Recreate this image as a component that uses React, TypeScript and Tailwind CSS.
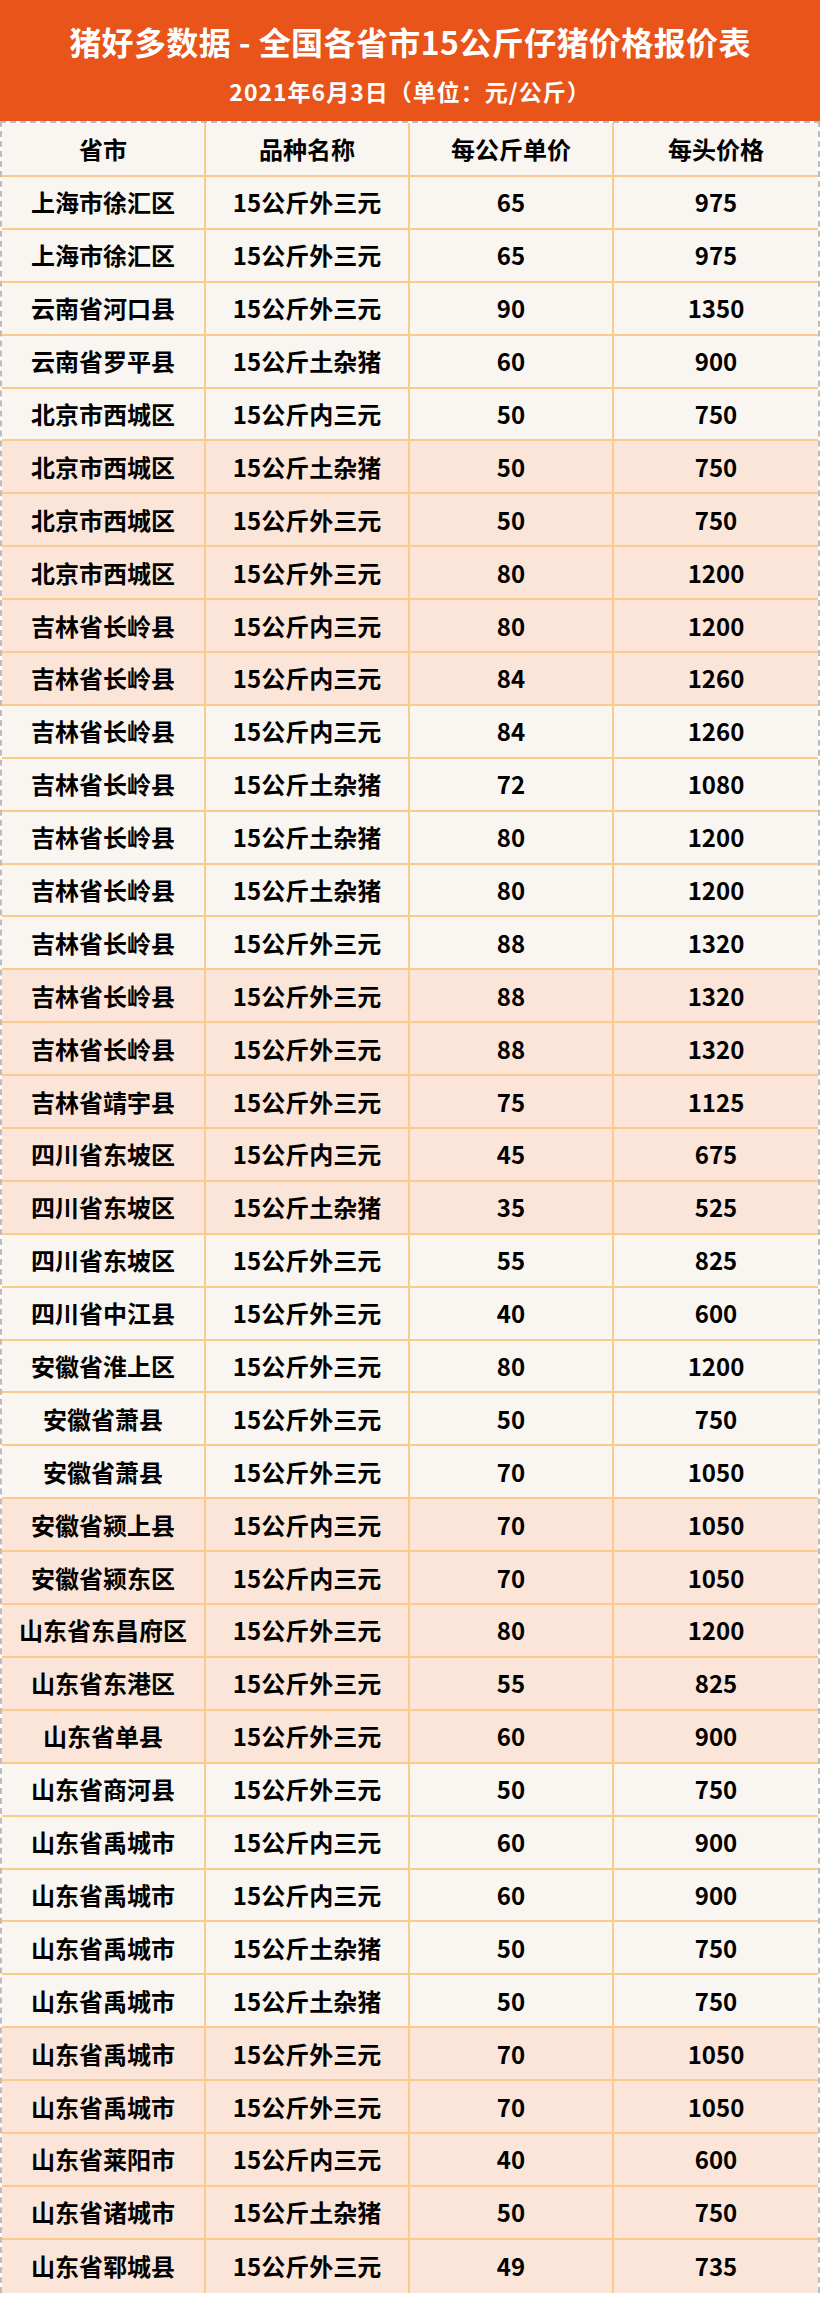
import React from "react";

const rows: [string, string, string, string][] = [
  ["上海市徐汇区", "15公斤外三元", "65", "975"],
  ["上海市徐汇区", "15公斤外三元", "65", "975"],
  ["云南省河口县", "15公斤外三元", "90", "1350"],
  ["云南省罗平县", "15公斤土杂猪", "60", "900"],
  ["北京市西城区", "15公斤内三元", "50", "750"],
  ["北京市西城区", "15公斤土杂猪", "50", "750"],
  ["北京市西城区", "15公斤外三元", "50", "750"],
  ["北京市西城区", "15公斤外三元", "80", "1200"],
  ["吉林省长岭县", "15公斤内三元", "80", "1200"],
  ["吉林省长岭县", "15公斤内三元", "84", "1260"],
  ["吉林省长岭县", "15公斤内三元", "84", "1260"],
  ["吉林省长岭县", "15公斤土杂猪", "72", "1080"],
  ["吉林省长岭县", "15公斤土杂猪", "80", "1200"],
  ["吉林省长岭县", "15公斤土杂猪", "80", "1200"],
  ["吉林省长岭县", "15公斤外三元", "88", "1320"],
  ["吉林省长岭县", "15公斤外三元", "88", "1320"],
  ["吉林省长岭县", "15公斤外三元", "88", "1320"],
  ["吉林省靖宇县", "15公斤外三元", "75", "1125"],
  ["四川省东坡区", "15公斤内三元", "45", "675"],
  ["四川省东坡区", "15公斤土杂猪", "35", "525"],
  ["四川省东坡区", "15公斤外三元", "55", "825"],
  ["四川省中江县", "15公斤外三元", "40", "600"],
  ["安徽省淮上区", "15公斤外三元", "80", "1200"],
  ["安徽省萧县", "15公斤外三元", "50", "750"],
  ["安徽省萧县", "15公斤外三元", "70", "1050"],
  ["安徽省颍上县", "15公斤内三元", "70", "1050"],
  ["安徽省颍东区", "15公斤内三元", "70", "1050"],
  ["山东省东昌府区", "15公斤外三元", "80", "1200"],
  ["山东省东港区", "15公斤外三元", "55", "825"],
  ["山东省单县", "15公斤外三元", "60", "900"],
  ["山东省商河县", "15公斤外三元", "50", "750"],
  ["山东省禹城市", "15公斤内三元", "60", "900"],
  ["山东省禹城市", "15公斤内三元", "60", "900"],
  ["山东省禹城市", "15公斤土杂猪", "50", "750"],
  ["山东省禹城市", "15公斤土杂猪", "50", "750"],
  ["山东省禹城市", "15公斤外三元", "70", "1050"],
  ["山东省禹城市", "15公斤外三元", "70", "1050"],
  ["山东省莱阳市", "15公斤内三元", "40", "600"],
  ["山东省诸城市", "15公斤土杂猪", "50", "750"],
  ["山东省郓城县", "15公斤外三元", "49", "735"],
];

const font = { fontFamily: '"Noto Sans CJK SC", "Noto Sans", sans-serif' };

function Cell({ text, last }: { text: string; last?: boolean }) {
  return (
    <div
      className={
        "flex items-center justify-center text-[24px] font-bold text-black leading-none " +
        (last ? "" : "border-r-2 border-[#FBCB8C]")
      }
    >
      {text}
    </div>
  );
}

export default function App() {
  return (
    <div className="w-[822px] bg-white" style={font}>
      <div className="w-[820px] h-[121px] bg-[#E8541A] flex flex-col items-center text-white font-bold">
        <div className="text-[32px] leading-none mt-[25px] tracking-[0.4px]">
          猪好多数据 - 全国各省市15公斤仔猪价格报价表
        </div>
        <div className="text-[23px] leading-none mt-[23px] tracking-[1px]">
          2021年6月3日（单位：元/公斤）
        </div>
      </div>
      <div className="w-[820px] border-l-2 border-r-2 border-t-2 border-dashed border-[#BDBDBD]">
        <div className="grid grid-cols-4 h-[54px] bg-[#F9F5F0] border-b-2 border-[#FBCB8C]">
          <Cell text="省市" />
          <Cell text="品种名称" />
          <Cell text="每公斤单价" />
          <Cell text="每头价格" last />
        </div>
        {rows.map((r, i) => {
          const peach = Math.floor(i / 5) % 2 === 1;
          const isLast = i === rows.length - 1;
          return (
            <div
              key={i}
              className={
                "grid grid-cols-4 h-[52.9px] " +
                (peach ? "bg-[#FBE5D9] " : "bg-[#F9F5F0] ") +
                (isLast ? "" : "border-b-2 border-[#FBCB8C]")
              }
            >
              <Cell text={r[0]} />
              <Cell text={r[1]} />
              <Cell text={r[2]} />
              <Cell text={r[3]} last />
            </div>
          );
        })}
      </div>
    </div>
  );
}
